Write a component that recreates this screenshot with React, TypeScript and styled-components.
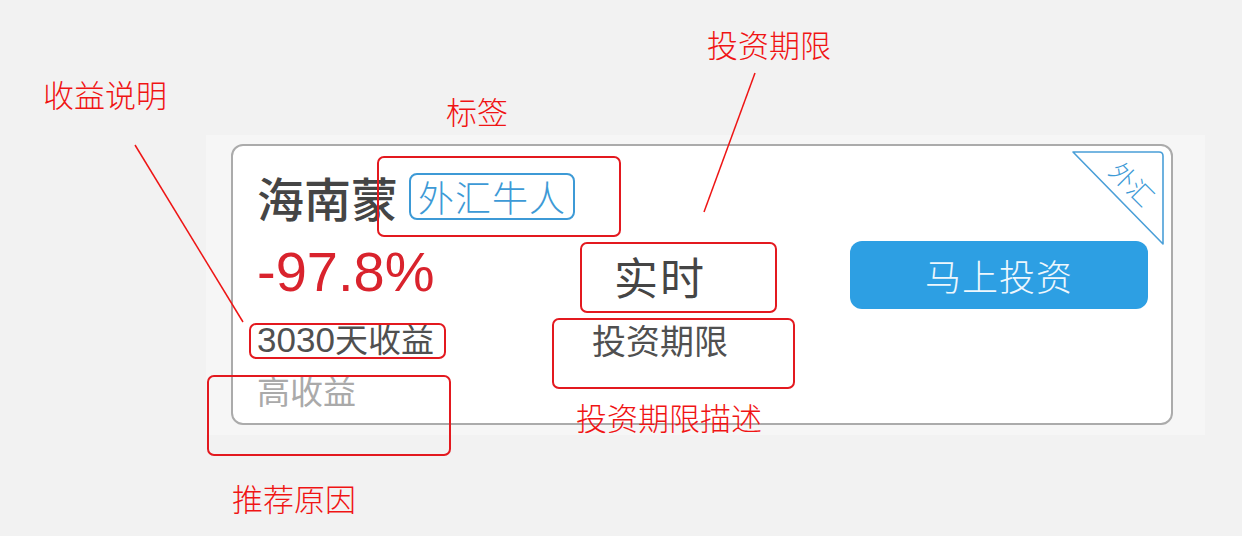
import React from "react";
import styled, { createGlobalStyle } from "styled-components";

const Global = createGlobalStyle`
  html, body { margin: 0; padding: 0; background: #f2f2f2; }
  body { font-family: "Noto Sans CJK SC", "Noto Sans", sans-serif; }
`;

const Canvas = styled.div`
  position: relative;
  width: 1242px;
  height: 536px;
  overflow: hidden;
  background: #f2f2f2;
  padding: 135px 0 0 206px;
  box-sizing: border-box;
`;

const Panel = styled.div`
  width: 999px;
  height: 300px;
  background: #f6f6f6;
  box-sizing: border-box;
  padding: 9px 0 0 25px;
`;

const Card = styled.div`
  position: relative;
  box-sizing: border-box;
  width: 942px;
  height: 281px;
  background: #fff;
  border: 2px solid #ababab;
  border-radius: 12px;
  display: flex;
  align-items: flex-start;
`;

const LeftCol = styled.div`
  width: 327px;
  box-sizing: border-box;
  padding: 23px 0 0 24px;
  display: flex;
  flex-direction: column;
`;

const Row = styled.div<{ $h: number; $mt?: number }>`
  height: ${(p) => p.$h}px;
  margin-top: ${(p) => p.$mt ?? 0}px;
  display: flex;
  align-items: center;
  white-space: nowrap;
`;

const Name = styled.span`
  font-size: 47px;
  line-height: 1;
  font-weight: 500;
  color: #454545;
`;

const Tag = styled.span`
  margin-left: 11px;
  height: 47px;
  box-sizing: border-box;
  padding: 0 7px;
  border: 2px solid #3d9ad6;
  border-radius: 8px;
  color: #3d9ad6;
  font-size: 36px;
  line-height: 42px;
  font-weight: 300;
  letter-spacing: 1px;
`;

const Rate = styled.span`
  font-family: "Liberation Sans", Arial, sans-serif;
  font-size: 56px;
  line-height: 1;
  color: #d9232d;
`;

const Sub = styled.span<{ $muted?: boolean }>`
  font-size: 33px;
  line-height: 1;
  color: ${(p) => (p.$muted ? "#aaaaaa" : "#505050")};
`;

const Digits = styled.span`
  font-family: "Liberation Sans", Arial, sans-serif;
  font-size: 35px;
`;

const MidCol = styled.div`
  width: 200px;
  padding-top: 103px;
  display: flex;
  flex-direction: column;
  align-items: center;
`;

const Period = styled.span`
  font-size: 44px;
  line-height: 1;
  color: #454545;
  letter-spacing: 2px;
`;

const PeriodNote = styled.span`
  font-size: 34px;
  line-height: 1;
  color: #505050;
`;

const ActionCol = styled.div`
  flex: 1;
  padding: 95px 23px 0 0;
  display: flex;
  justify-content: flex-end;
`;

const InvestButton = styled.button`
  width: 298px;
  height: 68px;
  border: none;
  border-radius: 12px;
  background: #2d9fe3;
  color: #eef7fd;
  font-family: "Noto Sans CJK SC", sans-serif;
  font-size: 36px;
  font-weight: 300;
  letter-spacing: 1px;
  cursor: pointer;
`;

const Ribbon = styled.svg`
  position: absolute;
  top: 3px;
  right: 5px;
  width: 96px;
  height: 98px;
`;

const Note = styled.span<{ $x: number; $y: number }>`
  position: absolute;
  left: ${(p) => p.$x}px;
  top: ${(p) => p.$y}px;
  font-size: 31px;
  line-height: 1;
  font-weight: 300;
  color: #f01414;
  white-space: nowrap;
`;

const Frame = styled.div<{ $x: number; $y: number; $w: number; $h: number }>`
  position: absolute;
  left: ${(p) => p.$x}px;
  top: ${(p) => p.$y}px;
  width: ${(p) => p.$w}px;
  height: ${(p) => p.$h}px;
  box-sizing: border-box;
  border: 2px solid #e3191f;
  border-radius: 7px;
`;

const Leaders = styled.svg`
  position: absolute;
  left: 0;
  top: 0;
  width: 1242px;
  height: 536px;
  pointer-events: none;
`;

export default function App() {
  return (
    <>
      <Global />
      <Canvas>
        <Panel>
          <Card>
            <LeftCol>
              <Row $h={54}>
                <Name>海南蒙</Name>
                <Tag>外汇牛人</Tag>
              </Row>
              <Row $h={54} $mt={22}>
                <Rate>-97.8%</Rate>
              </Row>
              <Row $h={36} $mt={22}>
                <Sub>
                  <Digits>3030</Digits>天收益
                </Sub>
              </Row>
              <Row $h={38} $mt={14}>
                <Sub $muted>高收益</Sub>
              </Row>
            </LeftCol>
            <MidCol>
              <Row $h={54}>
                <Period>实时</Period>
              </Row>
              <Row $h={38} $mt={18}>
                <PeriodNote>投资期限</PeriodNote>
              </Row>
            </MidCol>
            <ActionCol>
              <InvestButton>马上投资</InvestButton>
            </ActionCol>
            <Ribbon viewBox="0 0 96 98">
              <path
                d="M3 3 L89 3 Q93 3 93 7 L93 95 Z"
                fill="none"
                stroke="#4a9fd8"
                strokeWidth="1.6"
                strokeLinejoin="round"
              />
              <text
                x="60"
                y="37"
                fontSize="25"
                fill="#3d9ad6"
                textAnchor="middle"
                dominantBaseline="middle"
                transform="rotate(45 60 37)"
                fontFamily="Noto Sans CJK SC, sans-serif"
                fontWeight="300"
              >
                外汇
              </text>
            </Ribbon>
          </Card>
        </Panel>

        <Leaders viewBox="0 0 1242 536">
          <line x1="135" y1="145" x2="243" y2="322" stroke="#ee1515" strokeWidth="1.5" />
          <line x1="755" y1="73" x2="704" y2="212" stroke="#ee1515" strokeWidth="1.5" />
        </Leaders>

        <Frame $x={377} $y={156} $w={244} $h={81} />
        <Frame $x={580} $y={242} $w={197} $h={71} />
        <Frame $x={552} $y={318} $w={243} $h={71} />
        <Frame $x={249} $y={323} $w={197} $h={36} />
        <Frame $x={207} $y={375} $w={244} $h={81} />

        <Note $x={43} $y={78}>收益说明</Note>
        <Note $x={446} $y={95}>标签</Note>
        <Note $x={707} $y={28}>投资期限</Note>
        <Note $x={576} $y={401}>投资期限描述</Note>
        <Note $x={232} $y={482}>推荐原因</Note>
      </Canvas>
    </>
  );
}
